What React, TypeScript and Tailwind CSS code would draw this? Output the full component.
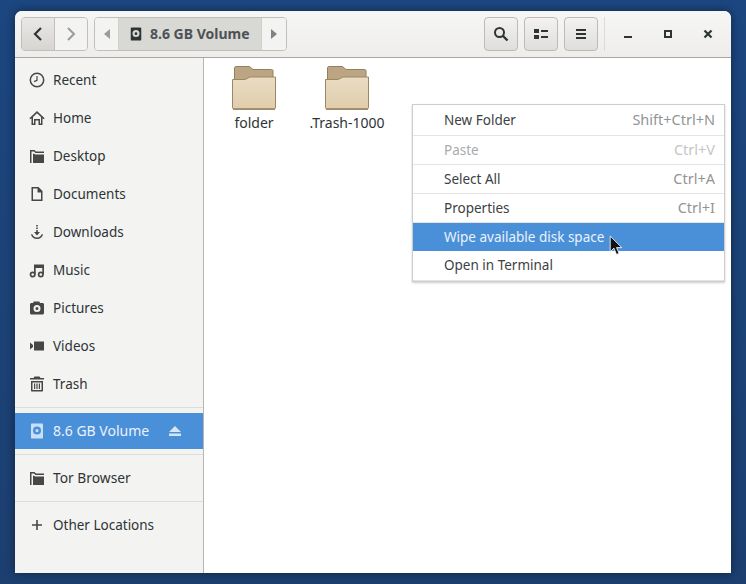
import type { ReactNode } from "react";

function Ico({ children, size = 16, color = "#474747" }: { children: ReactNode; size?: number; color?: string }) {
  return (
    <svg width={size} height={size} viewBox="0 0 16 16" fill={color} className="shrink-0">
      {children}
    </svg>
  );
}

const DiskShape = (
  <path
    fillRule="evenodd"
    d="M2 1.500C2 1 2.400.500 3 .500h10c.600 0 1 .500 1 1v13c0 .600-.400 1-1 1H3c-.600 0-1-.400-1-1zM8 3.500a4 4 0 1 0 0 8 4 4 0 0 0 0-8zM8 6a1.600 1.600 0 1 1 0 3.200A1.600 1.600 0 0 1 8 6z"
  />
);

const icons: Record<string, ReactNode> = {
  recent: (
    <>
      <circle cx="8" cy="8" r="6.700" fill="none" stroke="#474747" strokeWidth="1.500" />
      <path d="M8 4v4.400L5 9.600" fill="none" stroke="#474747" strokeWidth="1.200" />
    </>
  ),
  home: <path d="M8 1 .4 8.200l1 1 1.100-1V15h4v-4.500h3V15h4V8.200l1.100 1 1-1zM4 7l4-3.800L12 7v6.500h-1V9H5v4.500H4z" fillRule="evenodd" />,
  desktop: <path d="M1 2h4.500L7 3.500h8V5H6.500L5 3.500H2.500V15H1zM4 5.500l2.500 1H15V15H4z" />,
  documents: <path fillRule="evenodd" d="M2.500 1h7l4 4v10h-11zM4 2.500v11h8V6.500H8.500V2.500z" />,
  downloads: (
    <>
      <path d="M7.200 1h1.600v1.500H7.200zM7.200 3.500h1.600V5H7.200zM7.200 6h1.600v2h2.200L8 11.500 5 8h2.200z" />
      <path d="M2 10.500 3.200 10c.6 2 2.300 3.400 4.800 3.400s4.200-1.400 4.800-3.400l1.200.5C13.300 13.300 11 15 8 15s-5.300-1.700-6-4.500z" />
    </>
  ),
  music: (
    <>
      <circle cx="3.700" cy="12.500" r="2.200" fill="none" stroke="#474747" strokeWidth="1.700" />
      <circle cx="11.800" cy="12.500" r="2.200" fill="none" stroke="#474747" strokeWidth="1.700" />
      <path d="M5 2.500h10V12h-1.700V6H6.700v6H5z" />
    </>
  ),
  pictures: (
    <path
      fillRule="evenodd"
      d="M1 4.500C1 3.700 1.500 3 2.500 3H4l.7-1.500h5.600L11 3h2.500c1 0 1.500.700 1.500 1.500V13c0 .800-.700 1.500-1.500 1.500h-11C1.700 14.500 1 13.800 1 13zM8 5a3.500 3.500 0 1 0 0 7 3.500 3.500 0 0 0 0-7zM8 7a1.500 1.500 0 1 1 0 3 1.500 1.500 0 0 1 0-3z"
    />
  ),
  videos: <path d="M5 3.500h10v9H5zM1 4.500l3 2.500v2l-3 2.500z" />,
  trash: (
    <path
      fillRule="evenodd"
      d="M5.500.5h5L11.500 2H15v1.500H1V2h3.500zM2 5h12v9.500c0 .600-.400 1-1 1H3c-.600 0-1-.400-1-1zM3.500 6.500v7.500h9V6.500zM5 7.500h1.200V13H5zM7.400 7.500h1.200V13H7.400zM9.800 7.500H11V13H9.800z"
    />
  ),
  plus: <path d="M7.200 3h1.600v4.200H13v1.600H8.800V13H7.200V8.800H3V7.200h4.200z" />,
};

function Row({ icon, label, wide }: { icon: ReactNode; label: string; wide?: boolean }) {
  return (
    <div className="flex h-[38px] items-center pl-[14px] gap-[8px]">
      {icon}
      <span className={`${wide ? "text-[13.8px]" : "text-[13.5px]"} text-[#2e3436]`}>{label}</span>
    </div>
  );
}

function Sidebar() {
  const items = [
    ["recent", "Recent"],
    ["home", "Home"],
    ["desktop", "Desktop"],
    ["documents", "Documents"],
    ["downloads", "Downloads"],
    ["music", "Music"],
    ["pictures", "Pictures"],
    ["videos", "Videos"],
    ["trash", "Trash"],
  ];
  return (
    <aside className="w-[189px] shrink-0 bg-[#f3f3f2] border-r border-[#b6b6b3] pt-[3px]">
      {items.map(([k, label]) => (
        <Row key={k} icon={<Ico>{icons[k]}</Ico>} label={label} />
      ))}
      <div className="mt-[4px] h-px bg-[#dcdcda]" />
      <div className="mt-[5px] flex h-[36px] items-center bg-[#4a90d9] pl-[14px] gap-[8px] text-[#eaf2fb]">
        <Ico color="#c9dff5">{DiskShape}</Ico>
        <span className="-mt-px text-[14px]">8.6 GB Volume</span>
        <svg width="14" height="12" viewBox="0 0 14 12" fill="#d6e6f7" className="ml-auto mr-[21px]">
          <path d="M7 1l6 6H1zM1 8.500h12V11H1z" />
        </svg>
      </div>
      <div className="mt-[5px] h-px bg-[#dcdcda]" />
      <div className="mt-[4px]">
        <Row icon={<Ico>{icons.desktop}</Ico>} label="Tor Browser" wide />
      </div>
      <div className="mt-[4px] h-px bg-[#dcdcda]" />
      <div className="mt-[4px]">
        <Row icon={<Ico>{icons.plus}</Ico>} label="Other Locations" />
      </div>
    </aside>
  );
}

function FolderIcon() {
  return (
    <svg width="44" height="44" viewBox="0 0 44 44">
      <defs>
        <linearGradient id="fold" x1="0" y1="0" x2="0" y2="1">
          <stop offset="0" stopColor="#eadcc4" />
          <stop offset="1" stopColor="#dfccac" />
        </linearGradient>
      </defs>
      <path d="M2.500 2C2.500 1 3 .5 4 .5h13.500L21 3.500h18.500c1 0 1.500.5 1.500 1.500v10H2.500z" fill="#bca583" stroke="#94805f" />
      <path d="M.500 41.500V13.500h12.500l5-2.500h25.500v30.500c0 1-.5 1.500-1.500 1.500H2c-1 0-1.500-.5-1.500-1.500z" fill="url(#fold)" stroke="#9c8763" />
      <path d="M1 43.200h42" stroke="#8f7a58" strokeWidth="1.200" />
    </svg>
  );
}

function ToolButton({ children, className = "" }: { children: ReactNode; className?: string }) {
  return (
    <div className={`flex items-center justify-center bg-gradient-to-b from-[#f3f2f1] to-[#dfdedc] ${className}`}>
      {children}
    </div>
  );
}

function Header() {
  return (
    <header className="flex h-[47px] shrink-0 items-center border-b border-[#a8a69f] bg-gradient-to-b from-[#f6f6f5] to-[#eeedeb] pl-[6px]">
      <div className="flex h-[34px] w-[67px] rounded-[4px] border border-[#c0bfbb] overflow-hidden">
        <ToolButton className="w-[33px] border-r border-[#c0bfbb] !from-[#e9e8e6] !to-[#d6d5d2]">
          <svg width="16" height="16" viewBox="0 0 16 16" fill="none" stroke="#2e3436" strokeWidth="2.200">
            <path d="M11 2 5 8l6 6" />
          </svg>
        </ToolButton>
        <div className="flex flex-1 items-center justify-center bg-[#f3f3f1]">
          <svg width="16" height="16" viewBox="0 0 16 16" fill="none" stroke="#9a9c9c" strokeWidth="2">
            <path d="m5 2 6 6-6 6" />
          </svg>
        </div>
      </div>
      <div className="ml-[6px] flex h-[34px] w-[193px] rounded-[4px] border border-[#c0bfbb] overflow-hidden">
        <div className="flex w-[24px] items-center justify-center bg-[#f3f3f1] border-r border-[#d0cfcb]">
          <svg width="6" height="10" viewBox="0 0 6 10" fill="#9a9c9c"><path d="M6 0v10L0 5z" /></svg>
        </div>
        <div className="flex flex-1 items-center gap-[7px] bg-[#d8d8d5] pl-[10px]">
          <Ico size={14} color="#2e3436">{DiskShape}</Ico>
          <span className="-mt-px text-[14px] font-bold text-[#4c5254]">8.6 GB Volume</span>
        </div>
        <div className="flex w-[25px] items-center justify-center bg-[#f3f3f1] border-l border-[#d0cfcb]">
          <svg width="6" height="10" viewBox="0 0 6 10" fill="#7f8284"><path d="M0 0v10l6-5z" /></svg>
        </div>
      </div>
      <div className="ml-auto flex items-center gap-[6px]">
        <ToolButton className="h-[34px] w-[34px] rounded-[4px] border border-[#bcbbb7]">
          <svg width="16" height="16" viewBox="0 0 16 16" fill="none" stroke="#2e3436" strokeWidth="2">
            <circle cx="6.500" cy="6.500" r="4.500" />
            <path d="m10 10 4.500 4.500" strokeWidth="2.400" />
          </svg>
        </ToolButton>
        <ToolButton className="h-[34px] w-[34px] rounded-[4px] border border-[#bcbbb7]">
          <svg width="14" height="12" viewBox="0 0 14 12" fill="#2e3436">
            <path d="M0 1h5v4H0zM0 7h5v4H0zM7 2h7v2H7zM7 8h7v2H7z" />
          </svg>
        </ToolButton>
        <ToolButton className="h-[34px] w-[34px] rounded-[4px] border border-[#bcbbb7]">
          <svg width="12" height="12" viewBox="0 0 12 12" fill="#2e3436">
            <path d="M1 1h10v2H1zM1 5h10v2H1zM1 9h10v2H1z" />
          </svg>
        </ToolButton>
      </div>
      <div className="ml-[6px] h-[34px] w-px bg-[#dcdbd8]" />
      <div className="flex w-[126px] items-center justify-around pl-[3px] pr-[3px]">
        <svg width="10" height="10" viewBox="0 0 10 10" fill="#2e3436"><path d="M1 7h8v2H1z" /></svg>
        <svg width="10" height="10" viewBox="0 0 10 10" fill="none" stroke="#2e3436" strokeWidth="2"><path d="M2 2h6v6H2z" /></svg>
        <svg width="10" height="10" viewBox="0 0 10 10" fill="none" stroke="#2e3436" strokeWidth="2.200"><path d="m1.500 1.500 7 7M8.500 1.500l-7 7" /></svg>
      </div>
    </header>
  );
}

function MenuItem({ label, keys, state, tall }: { label: string; keys?: string; state?: "off" | "on"; tall?: boolean }) {
  const text = state === "off" ? "text-[#a8abab]" : state === "on" ? "text-[#eaf2fb]" : "text-[#3c4143]";
  const shortcut = state === "off" ? "text-[#c4c6c6]" : "text-[#929595]";
  return (
    <div className={`flex items-center justify-between pl-[31px] pr-[9px] text-[13.5px] ${tall ? "h-[31px]" : "h-[29px]"} ${state === "on" ? "!border-transparent bg-[#4a90d9] bg-clip-padding" : ""} ${text}`}>
      <span>{label}</span>
      {keys && <span className={`text-[14.5px] ${shortcut}`}>{keys}</span>}
    </div>
  );
}

function ContextMenu() {
  return (
    <div className="absolute left-[208px] top-[46px] w-[313px] border border-[#cdcdcd] bg-white shadow-[0_1px_2px_rgba(0,0,0,0.2)] divide-y divide-[#e4e4e4]">
      <MenuItem label="New Folder" keys="Shift+Ctrl+N" tall />
      <MenuItem label="Paste" keys="Ctrl+V" state="off" />
      <MenuItem label="Select All" keys="Ctrl+A" />
      <MenuItem label="Properties" keys="Ctrl+I" />
      <MenuItem label="Wipe available disk space" state="on" />
      <div className="flex h-[29px] items-center pb-[2px] pl-[31px] text-[13.5px] text-[#3c4143]">Open in Terminal</div>
      <svg width="15" height="21" viewBox="0 0 14 20" className="absolute left-[196px] top-[130px]">
        <path d="M1 1v15l3.500-3.500 2.500 6 2.500-1-2.500-5.500H12z" fill="#111" stroke="#fff" strokeWidth="0.800" />
      </svg>
    </div>
  );
}

export default function App() {
  return (
    <div className="h-[584px] w-[746px] overflow-hidden bg-gradient-to-b from-[#1b467f] to-[#1c3f70] px-[15px] pt-[11px] font-['Noto_Sans',sans-serif]">
      <div className="flex h-[562px] flex-col overflow-hidden rounded-t-[7px] bg-white shadow-[0_0_10px_rgba(0,0,0,0.45)]">
        <Header />
        <div className="flex min-h-0 flex-1">
          <Sidebar />
          <main className="relative flex-1 bg-white">
            <div className="flex pl-[3px] pt-[8px]">
              {["folder", ".Trash-1000"].map((name) => (
                <div key={name} className="flex w-[93px] flex-col items-center">
                  <FolderIcon />
                  <span className="mt-[2px] pl-px text-[14px] text-[#2e3436]">{name}</span>
                </div>
              ))}
            </div>
            <ContextMenu />
          </main>
        </div>
      </div>
    </div>
  );
}
